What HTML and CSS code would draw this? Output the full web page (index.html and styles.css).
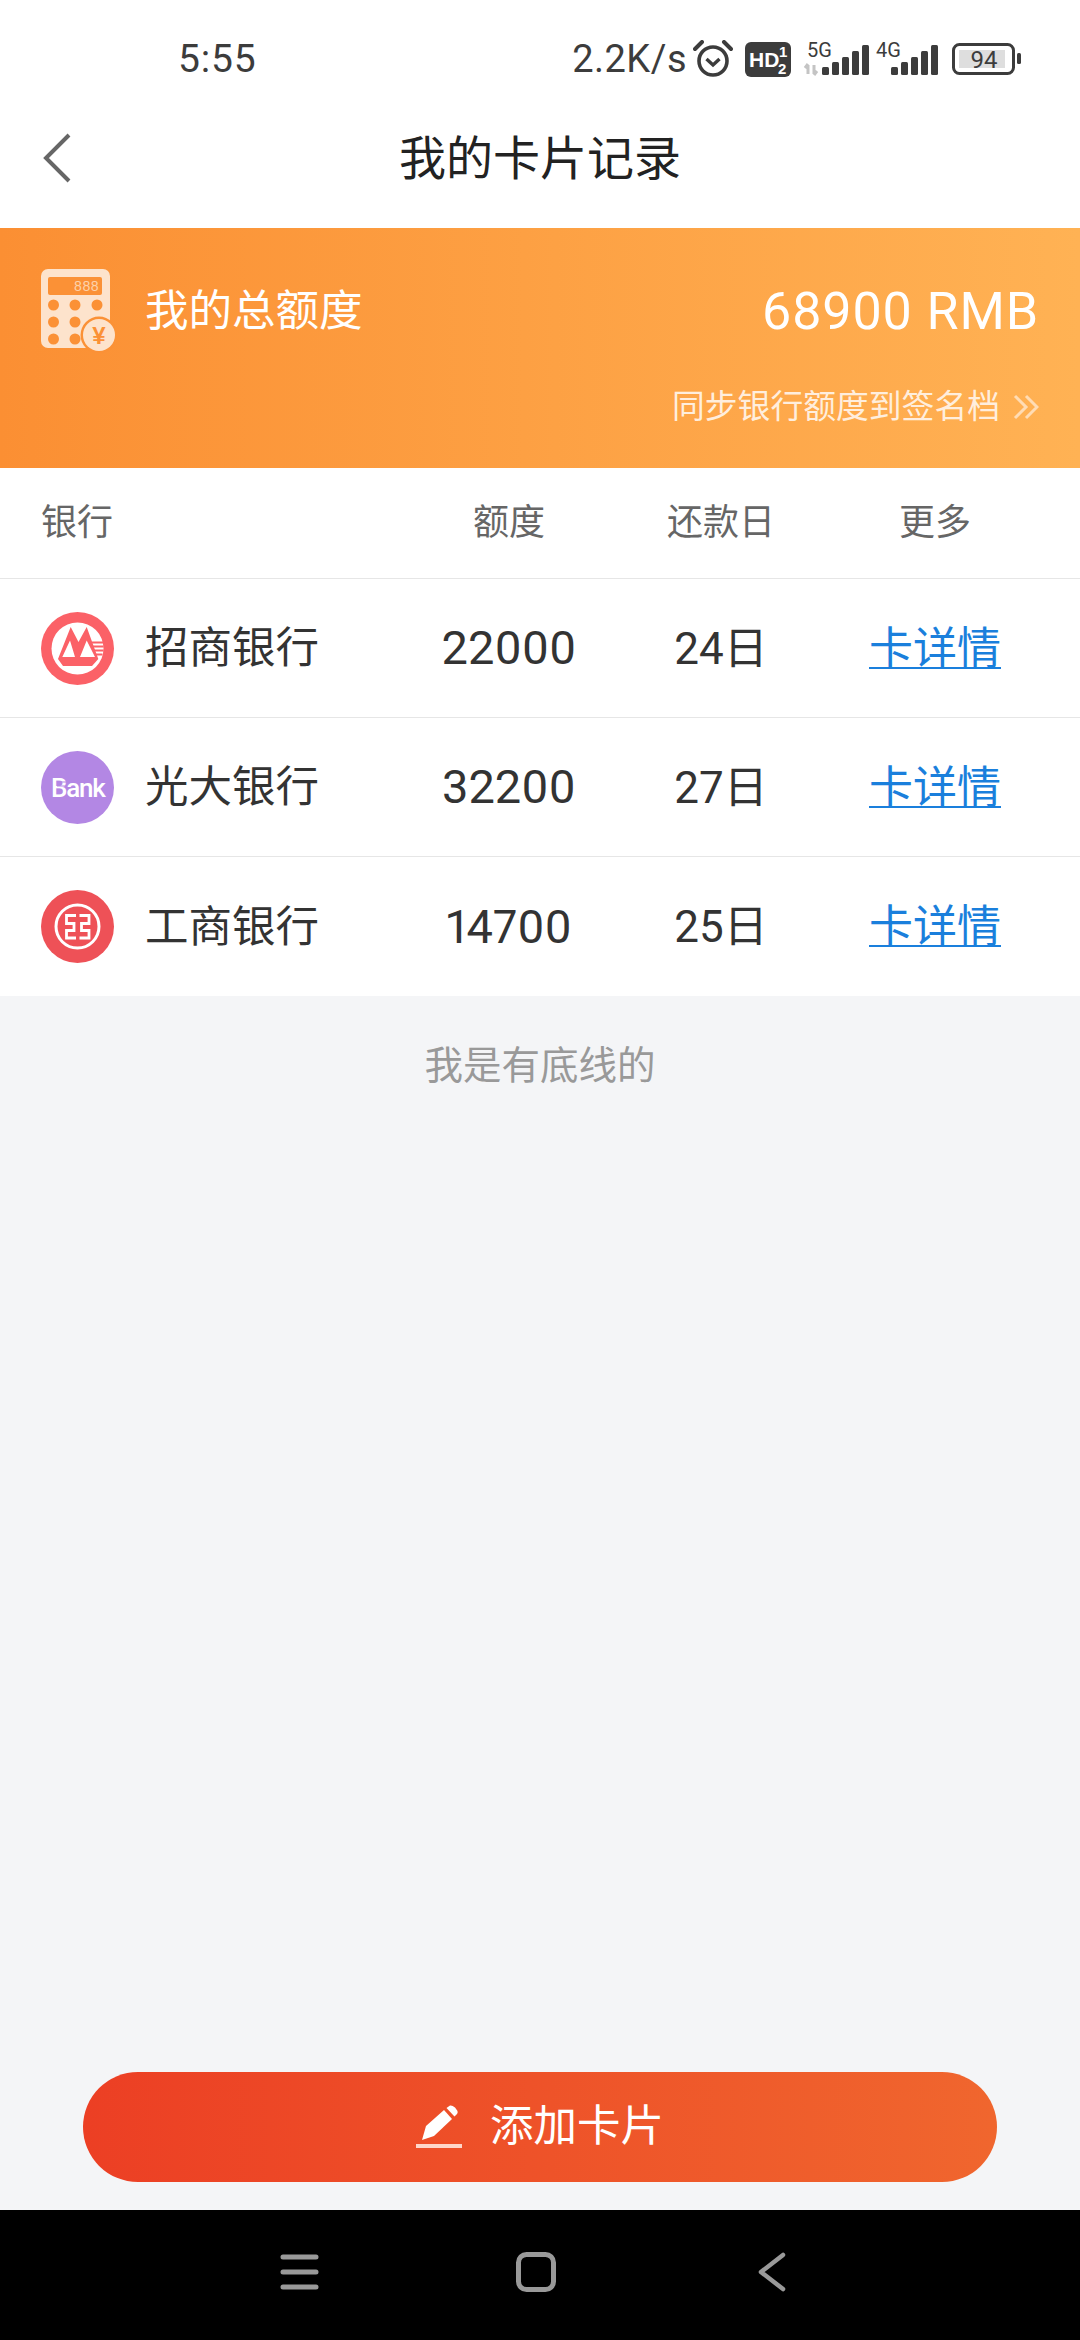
FILE: index.html
```html
<!DOCTYPE html>
<html>
    <head>
        <title>我的卡片记录</title>
        <meta charset="utf-8">
        <link rel="stylesheet" href="styles.css">
    </head>
    <body>
        <div class="page">
            <div class="status-bar">
                <span class="status-time">5:55</span>
                <div class="status-right">
                    <span class="status-speed">2.2K/s</span>
                    <svg class="ic-alarm" width="40" height="38" viewBox="0 0 40 38">
                        <circle cx="20" cy="21" r="14" fill="none" stroke="#3c3c3c" stroke-width="3.6"/>
                        <path d="M13.5 19 L20 25 L26.5 19" fill="none" stroke="#3c3c3c" stroke-width="3.4"/>
                        <path d="M2 9 L9 2 M31 2 L38 9" stroke="#3c3c3c" stroke-width="4" stroke-linecap="round"/>
                    </svg>
                    <svg class="ic-hd" width="46" height="35" viewBox="0 0 46 35">
                        <rect width="46" height="35" rx="6" fill="#3c3c3c"/>
                        <text x="4" y="25" class="hd-text">HD</text>
                        <text x="34" y="15" class="hd-num">1</text>
                        <text x="33" y="32" class="hd-num">2</text>
                    </svg>
                    <svg class="ic-signal-5g" width="67" height="44" viewBox="0 0 67 44">
                        <text x="5" y="20" class="net-text">5G</text>
                        <path d="M6 28 V37 M3 31 L6 27 M12 28 V37 M15 34 L12 38" fill="none" stroke="#c4c4c4" stroke-width="3"/>
                        <g fill="#3c3c3c">
                            <rect x="20" y="30" width="7" height="8" rx="1.5"/>
                            <rect x="30" y="25" width="7" height="13" rx="1.5"/>
                            <rect x="40" y="20" width="7" height="18" rx="1.5"/>
                            <rect x="50" y="14" width="7" height="24" rx="1.5"/>
                            <rect x="60" y="8" width="7" height="30" rx="1.5"/>
                        </g>
                    </svg>
                    <svg class="ic-signal-4g" width="62" height="44" viewBox="0 0 62 44">
                        <text x="0" y="20" class="net-text">4G</text>
                        <g fill="#3c3c3c">
                            <rect x="15" y="30" width="7" height="8" rx="1.5"/>
                            <rect x="25" y="25" width="7" height="13" rx="1.5"/>
                            <rect x="35" y="20" width="7" height="18" rx="1.5"/>
                            <rect x="45" y="14" width="7" height="24" rx="1.5"/>
                            <rect x="55" y="8" width="7" height="30" rx="1.5"/>
                        </g>
                    </svg>
                    <svg class="ic-battery" width="69" height="32" viewBox="0 0 69 32">
                        <rect x="1.5" y="1.5" width="60" height="29" rx="6" fill="none" stroke="#3c3c3c" stroke-width="3"/>
                        <rect x="7" y="7" width="46" height="18" fill="#dedede"/>
                        <text x="32" y="25" text-anchor="middle" class="batt-text">94</text>
                        <rect x="65" y="10" width="4" height="11" rx="1.5" fill="#3c3c3c"/>
                    </svg>
                </div>
            </div>

            <div class="title-bar">
                <svg class="back-icon" width="30" height="50" viewBox="0 0 30 50">
                    <path d="M27 2 L4 25 L27 48" fill="none" stroke="#666" stroke-width="4"/>
                </svg>
                <h1 class="page-title">我的卡片记录</h1>
            </div>

            <div class="banner">
                <div class="banner-top">
                    <svg class="calc-icon" width="74" height="84" viewBox="0 0 74 84">
                        <rect x="0" y="0" width="69" height="79" rx="7" fill="#fde3cc"/>
                        <rect x="7" y="8" width="54" height="18" rx="2" fill="#fb9136"/>
                        <text x="58" y="22" text-anchor="end" class="calc-text">888</text>
                        <g fill="#fb9136">
                            <circle cx="12.5" cy="36" r="5.5"/><circle cx="34" cy="36" r="5.5"/><circle cx="56" cy="36" r="5.5"/>
                            <circle cx="12.5" cy="53" r="5.5"/><circle cx="34" cy="53" r="5.5"/>
                            <circle cx="12.5" cy="70" r="5.5"/><circle cx="34" cy="70" r="5.5"/>
                        </g>
                        <circle cx="58" cy="66" r="18.5" fill="#fb9136"/>
                        <circle cx="58" cy="66" r="16" fill="#fde3cc"/>
                        <text x="58" y="74.5" text-anchor="middle" class="calc-yen">¥</text>
                    </svg>
                    <span class="banner-label">我的总额度</span>
                    <span class="banner-amount">68900 RMB</span>
                </div>
                <div class="banner-sync">
                    <span>同步银行额度到签名档</span>
                    <svg width="26" height="26" viewBox="0 0 26 26">
                        <path d="M2 2 L13 13 L2 24 M13 2 L24 13 L13 24" fill="none" stroke="#ffdcb4" stroke-width="3"/>
                    </svg>
                </div>
            </div>

            <div class="card-table">
                <div class="row head">
                    <span class="col-bank">银行</span>
                    <span>额度</span>
                    <span>还款日</span>
                    <span>更多</span>
                </div>
                <div class="row">
                    <span class="col-bank">
                        <svg class="logo" width="73" height="73" viewBox="0 0 73 73">
                            <circle cx="36.5" cy="36.5" r="36.5" fill="#fb6167"/>
                            <circle cx="36.5" cy="36.5" r="26" fill="#fff"/>
                            <path d="M17 47 L29.7 15 L37.5 30 L45.7 15 L57.3 47 L51 54 H22 Z" fill="#fb6167"/>
                            <path d="M21.3 45 L29 28.5 L34 45 Z M39 45 L45.7 28.5 L54 45 Z" fill="#fff"/>
                            <path d="M51 30.5 H62 M52 34.5 H62.5 M53 38.5 H62.5 M55 42.5 H61.5" stroke="#fb6167" stroke-width="2"/>
                        </svg>
                        <span class="bank-name">招商银行</span>
                    </span>
                    <span class="num">22000</span>
                    <span class="due">24日</span>
                    <a class="detail">卡详情</a>
                </div>
                <div class="row">
                    <span class="col-bank">
                        <svg class="logo" width="73" height="73" viewBox="0 0 73 73">
                            <circle cx="36.5" cy="36.5" r="36.5" fill="#b387e4"/>
                            <text x="10" y="46" class="bank-text">Bank</text>
                            <path d="M16 31 H26 M16 35 H26" stroke="#b387e4" stroke-width="1.2"/>
                        </svg>
                        <span class="bank-name">光大银行</span>
                    </span>
                    <span class="num">32200</span>
                    <span class="due">27日</span>
                    <a class="detail">卡详情</a>
                </div>
                <div class="row">
                    <span class="col-bank">
                        <svg class="logo" width="73" height="73" viewBox="0 0 73 73">
                            <circle cx="36.5" cy="36.5" r="36.5" fill="#ee5157"/>
                            <circle cx="36.5" cy="36.5" r="21.5" fill="none" stroke="#fff" stroke-width="3"/>
                            <path d="M35 25.5 H25.5 V33.5 H33 V40.5 H25.5 V48 H35 M38.5 25.5 H48 V33.5 H40.5 V40.5 H48 V48 H38.5" fill="none" stroke="#fff" stroke-width="2.8"/>
                        </svg>
                        <span class="bank-name">工商银行</span>
                    </span>
                    <span class="num">14700</span>
                    <span class="due">25日</span>
                    <a class="detail">卡详情</a>
                </div>
            </div>

            <div class="main">
                <p class="bottom-line">我是有底线的</p>
                <div class="add-card">
                    <svg width="46" height="44" viewBox="0 0 46 44">
                        <path d="M6 35 L10 21 L28 5 L36 14 L18 31 Z" fill="#fff"/>
                        <path d="M30.5 3 L34 0.5 Q36 0 39 2.5 L41.5 6 Q42 8 41 9 L38.5 11.5 Z" fill="#fff"/>
                        <rect x="0" y="39" width="46" height="4" fill="#ffd6c9"/>
                    </svg>
                    <span>添加卡片</span>
                </div>
            </div>

            <div class="nav-bar">
                <svg width="39" height="38" viewBox="0 0 39 38">
                    <path d="M3 4 H36 M3 19 H36 M3 34 H36" stroke="#999" stroke-width="5" stroke-linecap="round"/>
                </svg>
                <svg width="40" height="40" viewBox="0 0 40 40">
                    <rect x="2.5" y="2.5" width="35" height="35" rx="8" fill="none" stroke="#999" stroke-width="5"/>
                </svg>
                <svg class="nav-back" width="28" height="40" viewBox="0 0 28 40">
                    <path d="M25 3 L3 20 L25 37" fill="none" stroke="#999" stroke-width="4.5" stroke-linecap="round" stroke-linejoin="round"/>
                </svg>
            </div>
        </div>
    </body>
</html>
```

FILE: styles.css
```css
* {
    box-sizing: border-box;
}
body {
    margin: 0;
    font-family: Roboto, "Noto Sans CJK SC", sans-serif;
    color: #333;
}
.page {
    width: 1080px;
    height: 2340px;
    display: flex;
    flex-direction: column;
    background-color: #f4f5f7;
    overflow: hidden;
}

/* status bar */
.status-bar {
    height: 80px;
    background-color: #fff;
    display: flex;
    align-items: flex-end;
    justify-content: space-between;
    padding: 0 59px 0 178px;
    color: #3c3c3c;
}
.status-time {
    font-size: 39px;
    line-height: 40px;
    letter-spacing: 0.8px;
    margin-bottom: 1px;
}
.status-right {
    display: flex;
    align-items: center;
    height: 40px;
    margin-bottom: 1px;
}
.status-speed {
    font-size: 38px;
    line-height: 40px;
    letter-spacing: 0.5px;
}
.ic-alarm {
    margin-left: 6px;
}
.ic-hd {
    margin-left: 12px;
}
.ic-signal-5g {
    margin-left: 11px;
}
.ic-signal-4g {
    margin-left: 7px;
}
.ic-battery {
    margin-left: 14px;
}
.hd-text {
    font: bold 21px "Liberation Sans", sans-serif;
    fill: #fff;
}
.hd-num {
    font: bold 15px "Liberation Sans", sans-serif;
    fill: #fff;
}
.net-text {
    font: 20px Roboto, sans-serif;
    fill: #3c3c3c;
}
.batt-text {
    font: 24px Roboto, sans-serif;
    fill: #3c3c3c;
}

/* title */
.title-bar {
    height: 148px;
    background-color: #fff;
    display: flex;
    align-items: center;
    justify-content: center;
    position: relative;
}
.back-icon {
    position: absolute;
    left: 42px;
    top: 53px;
}
.page-title {
    margin: 0;
    font-size: 47px;
    font-weight: 400;
    color: #222;
}

/* banner */
.banner {
    height: 240px;
    padding: 41px 41px 0;
    background: linear-gradient(90deg, #fb8f33, #ffb254);
    color: #fff;
}
.banner-top {
    display: flex;
    align-items: center;
    height: 84px;
}
.calc-icon {
    flex: none;
}
.calc-text {
    font: 14px "Liberation Mono", monospace;
    fill: #fdd2aa;
}
.calc-yen {
    font: bold 24px "Liberation Sans", sans-serif;
    fill: #fb9136;
}
.banner-label {
    margin-left: 30px;
    padding-top: 2px;
    font-size: 43.5px;
    line-height: 52px;
}
.banner-amount {
    margin-left: auto;
    padding-top: 2px;
    font-size: 52px;
    line-height: 60px;
    letter-spacing: 0.9px;
}
.banner-sync {
    display: flex;
    justify-content: flex-end;
    align-items: center;
    gap: 13px;
    margin-top: 32px;
    font-size: 32.8px;
    line-height: 44px;
    color: #ffeedd;
}

/* table */
.card-table {
    background-color: #fff;
}
.row {
    display: grid;
    grid-template-columns: 362px 212px 212px 216px;
    align-items: center;
    justify-items: center;
    height: 139px;
    padding-left: 41px;
    border-bottom: 1px solid #e6e6e6;
    font-size: 44px;
    line-height: 56px;
}
.row:last-child {
    border-bottom: none;
}
.row.head {
    height: 111px;
    font-size: 36px;
    color: #666;
}
.col-bank {
    justify-self: start;
    display: flex;
    align-items: center;
    font-size: 43.5px;
}
.head .col-bank {
    font-size: 36px;
}
.logo {
    margin-right: 31px;
}
.bank-name {
    padding-top: 2px;
}
.num {
    font-size: 47px;
    font-variant-numeric: proportional-nums;
}
.due {
    padding-top: 1px;
}
.detail {
    padding-top: 1px;
    color: #1a7fdc;
    text-decoration: underline;
    text-decoration-thickness: 2px;
    text-underline-offset: 3px;
}
.bank-text {
    font: 500 26px Roboto, sans-serif;
    letter-spacing: -1.2px;
    fill: #fff;
}

/* bottom part */
.main {
    flex: 1;
    display: flex;
    flex-direction: column;
    align-items: center;
    justify-content: space-between;
    padding-bottom: 28px;
}
.bottom-line {
    margin: 42px 0 0;
    font-size: 38.5px;
    line-height: 56px;
    color: #999;
}
.add-card {
    width: 914px;
    height: 110px;
    border-radius: 55px;
    display: flex;
    align-items: center;
    justify-content: center;
    gap: 28px;
    font-size: 43.5px;
    line-height: 56px;
    color: #fff;
    background: linear-gradient(90deg, #ec3f24, #f0662e);
}
.nav-bar {
    height: 130px;
    background-color: #000;
    display: flex;
    align-items: center;
    gap: 197px;
    padding: 0 0 6px 280px;
}
.nav-back {
    margin-left: 5px;
}
```
